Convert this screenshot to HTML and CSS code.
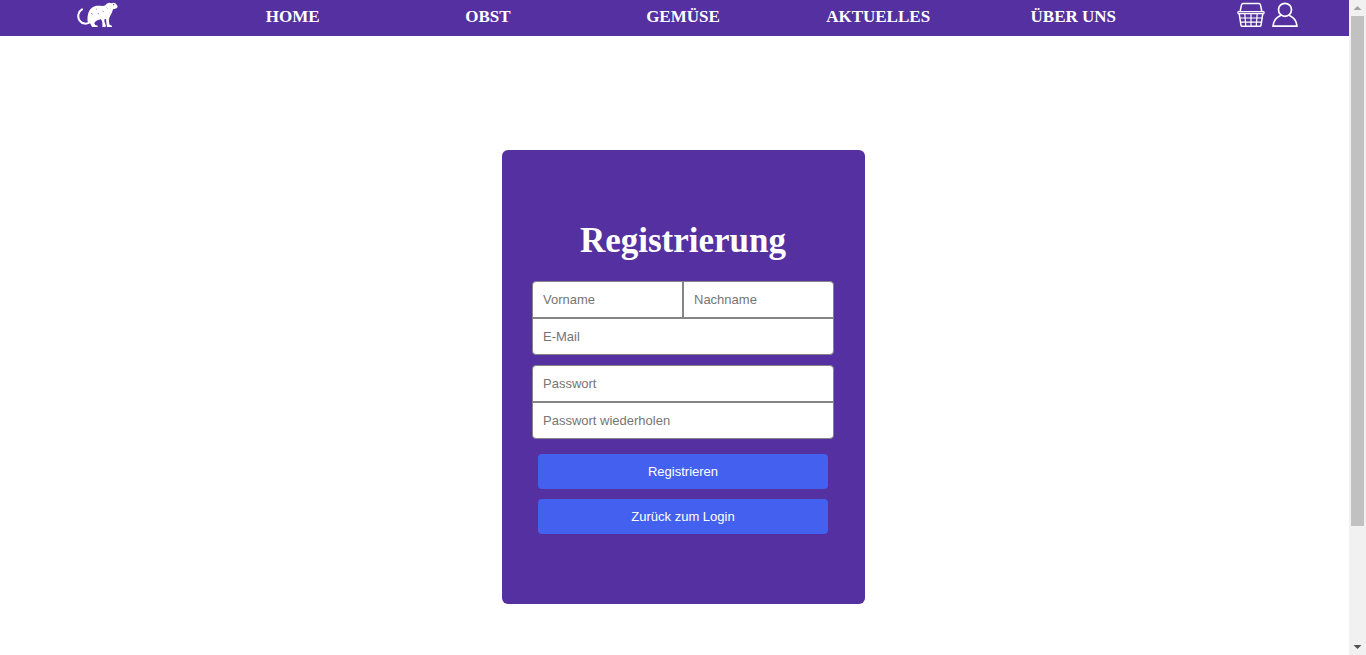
FILE: index.html
```html
<!DOCTYPE html>
<html lang="de">
<head>
<meta charset="utf-8">
<meta name="viewport" content="width=device-width, initial-scale=1">
<title>Registrierung</title>
<link rel="stylesheet" href="styles.css">
</head>
<body>
<header>
  <nav class="nav" aria-label="Hauptmenü">
    <a class="nav-logo" href="#" aria-label="Startseite">
      <svg width="42" height="28" viewBox="21 4 126 84" aria-hidden="true">
        <path d="M36 29C25 35 21 52 29 63C36 73 50 75 62 67" fill="none" stroke="#fff" stroke-width="6" stroke-linecap="round"/>
        <path fill="#fff" d="M53 66C51 46 56 25 76 19C88 16 98 21 106 17C110 10 118 7 125 11C133 6 139 13 143 20C142 27 134 28 129 29C127 39 122 46 118 54C116 62 117 70 119 75L126 78V82H111C109 72 109 64 108 58L104 58L103 65L107 76V82H97C98 70 97 63 92 58C87 61 82 62 78 64C75 67 74 69 73 72L76 76L83 78V82H66L60 70Z"/>
        <circle cx="131" cy="15" r="2" fill="#5430a0"/>
        <path d="M64 40l3 4M84 40l2 4M98 35l3 1M78 28l2 1M110 24l2 2" stroke="#5430a0" stroke-width="2"/>
      </svg>
    </a>
    <a href="#">HOME</a>
    <a href="#">OBST</a>
    <a href="#">GEMÜSE</a>
    <a href="#">AKTUELLES</a>
    <a href="#">ÜBER UNS</a>
    <div class="nav-icons">
      <a href="#" aria-label="Warenkorb">
        <svg width="28" height="26" viewBox="0 0 28 26" fill="none" stroke="#fff" stroke-width="1.500" stroke-linejoin="round" aria-hidden="true">
          <path d="M3 10L4.600 2.600Q4.900 1.500 6 1.500H22Q23.100 1.500 23.400 2.600L25 10"/>
          <rect x=".9" y="9.700" width="26.200" height="2" rx=".8" stroke-width="1.200"/>
          <path d="M2.200 11.700L4 23.300Q4.200 24.300 5.200 24.300H22.800Q23.800 24.300 24 23.300L25.800 11.700"/>
          <path d="M3 16H25M3.600 20.200H24.400M7.800 11.700L8.800 24.300M14 11.700V24.300M20.200 11.700L19.200 24.300" stroke-width="1.200"/>
        </svg>
      </a>
      <a href="#" aria-label="Konto">
        <svg width="26" height="26" viewBox="0 0 26 26" fill="none" stroke="#fff" stroke-width="1.700" stroke-linejoin="round" aria-hidden="true">
          <circle cx="13" cy="7.800" r="6.500"/>
          <path d="M9 13.200C4.500 15 1.500 18.500 1 24.200H25C24.500 18.500 21.500 15 17 13.200"/>
        </svg>
      </a>
    </div>
  </nav>
</header>

<main class="page">
  <form class="card">
    <h1>Registrierung</h1>
    <div class="fields fields-person">
      <input class="first-name" type="text" placeholder="Vorname" aria-label="Vorname">
      <input class="last-name" type="text" placeholder="Nachname" aria-label="Nachname">
      <input class="wide last" type="email" placeholder="E-Mail" aria-label="E-Mail">
    </div>
    <div class="fields">
      <input class="wide first" type="password" placeholder="Passwort" aria-label="Passwort">
      <input class="wide last" type="password" placeholder="Passwort wiederholen" aria-label="Passwort wiederholen">
    </div>
    <div class="actions">
      <button type="submit">Registrieren</button>
      <button type="button">Zurück zum Login</button>
    </div>
  </form>
</main>

<div class="scrollbar" aria-hidden="true">
  <svg width="17" height="16" viewBox="0 0 17 16"><path d="M4.500 10L8.500 6l4 4z" fill="#a3a3a3"/></svg>
  <div class="track"><div class="thumb"></div></div>
  <svg width="17" height="17" viewBox="0 0 17 17"><path d="M4.500 7l4 4 4-4z" fill="#505050"/></svg>
</div>
</body>
</html>
```
FILE: styles.css
```css
* {
  box-sizing: border-box;
}

body {
  margin: 0;
  min-height: 100vh;
  display: flex;
  flex-direction: column;
  background: #fff;
  font-family: "Liberation Sans", Arial, sans-serif;
}

.nav {
  display: grid;
  grid-template-columns: repeat(7, 1fr);
  justify-items: center;
  align-items: center;
  height: 36px;
  padding-bottom: 2px;
  background: #5430a0;
}

.nav a {
  color: #fff;
  font: bold 17px/20px "Liberation Serif", serif;
  text-decoration: none;
}

.nav svg {
  display: block;
}

.nav-logo {
  padding-bottom: 4px;
}

.nav-icons {
  display: flex;
  gap: 7px;
  padding: 0 2px 4px 0;
}

.page {
  flex: 1;
  display: flex;
  justify-content: center;
  align-items: flex-start;
  padding: 114px 16px 51px;
}

.card {
  display: flex;
  flex-direction: column;
  align-items: center;
  width: 100%;
  max-width: 363px;
  padding: 70px 30px;
  border-radius: 6px;
  background: #5430a0;
}

h1 {
  margin: 0 0 19px;
  color: #fff;
  font: bold 35px/42px "Liberation Serif", serif;
}

.fields {
  display: grid;
  grid-template-columns: 1fr 1fr;
  width: 100%;
  max-width: 302px;
}

.fields-person {
  margin-bottom: 10px;
}

.fields input {
  min-width: 0;
  height: 37px;
  padding: 10px;
  border: 1px solid #858585;
  border-radius: 0;
  background: #fff;
  color: #222;
  font: 13px/15px "Liberation Sans", Arial, sans-serif;
}

.fields input::placeholder {
  color: #757575;
}

.fields .wide {
  grid-column: 1 / -1;
}

.fields .first-name {
  border-top-left-radius: 4px;
}

.fields .last-name {
  border-top-right-radius: 4px;
}

.fields .first {
  border-radius: 4px 4px 0 0;
}

.fields .last {
  border-radius: 0 0 4px 4px;
}

.actions {
  display: grid;
  gap: 10px;
  width: 100%;
  max-width: 290px;
  margin-top: 15px;
}

.actions button {
  height: 35px;
  border: 0;
  border-radius: 4px;
  background: #4361ee;
  color: #fff;
  font: 13px/15px "Liberation Sans", Arial, sans-serif;
  cursor: pointer;
}

.scrollbar {
  position: fixed;
  top: 0;
  right: 0;
  bottom: 0;
  display: flex;
  flex-direction: column;
  width: 17px;
  background: #f1f1f1;
}

.track {
  flex: 1;
  padding: 0 2px;
}

.thumb {
  height: 82%;
  background: #c1c1c1;
}
```
